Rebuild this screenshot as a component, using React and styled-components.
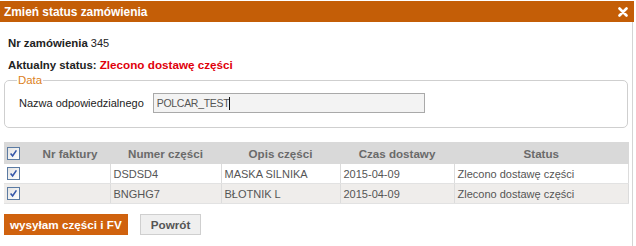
import React from "react"
import styled, { createGlobalStyle } from "styled-components"

const GlobalStyle = createGlobalStyle`
  html, body {
    margin: 0;
    padding: 0;
    background: #fff;
  }
  body {
    font-family: "Liberation Sans", Arial, sans-serif;
    font-size: 11px;
    color: #222;
  }
`

const parts = [
  { nr: "DSDSD4", opis: "MASKA SILNIKA", czas: "2015-04-09", status: "Zlecono dostawę części" },
  { nr: "BNGHG7", opis: "BŁOTNIK L", czas: "2015-04-09", status: "Zlecono dostawę części" },
]

const Check = () => (
  <CheckBox>
    <svg width="9" height="9" viewBox="0 0 9 9">
      <path d="M1.6 4.6 L3.6 7 L7.4 1.4" fill="none" stroke="#3556a8" strokeWidth="1.6" />
    </svg>
  </CheckBox>
)

const App = () => {
  return (
    <>
      <GlobalStyle />
      <Dialog>
        <TitleBar>
          <Title>Zmień status zamówienia</Title>
          <Close>
            <svg width="10" height="10" viewBox="0 0 10 10">
              <path d="M1.5 1.5 L8.5 8.5 M8.5 1.5 L1.5 8.5" stroke="#fff" strokeWidth="2.6" strokeLinecap="round" />
            </svg>
          </Close>
        </TitleBar>
        <Body>
          <InfoRow>
            <b>Nr zamówienia</b> <span>345</span>
          </InfoRow>
          <InfoRow $gap>
            <b>Aktualny status:</b> <Red>Zlecono dostawę części</Red>
          </InfoRow>
          <Fieldset>
            <Legend>Data</Legend>
            <FieldRow>
              <label>Nazwa odpowiedzialnego</label>
              <InputWrap>
                <Input type="text" defaultValue="POLCAR_TEST" readOnly />
                <Caret />
              </InputWrap>
            </FieldRow>
          </Fieldset>
          <Table>
            <colgroup>
              <col style={{ width: 26 }} />
              <col style={{ width: 80 }} />
              <col style={{ width: 111 }} />
              <col style={{ width: 119 }} />
              <col style={{ width: 114 }} />
              <col />
            </colgroup>
            <thead>
              <tr>
                <Th><Check /></Th>
                <Th>Nr faktury</Th>
                <Th>Numer części</Th>
                <Th>Opis części</Th>
                <Th>Czas dostawy</Th>
                <Th>Status</Th>
              </tr>
            </thead>
            <tbody>
              {parts.map((p, i) => (
                <Row key={p.nr} $alt={i % 2 === 1}>
                  <CheckCell><Check /></CheckCell>
                  <Td $plain></Td>
                  <Td>{p.nr}</Td>
                  <Td>{p.opis}</Td>
                  <Td>{p.czas}</Td>
                  <Td>{p.status}</Td>
                </Row>
              ))}
            </tbody>
          </Table>
          <Buttons>
            <Button $primary>wysyłam części i FV</Button>
            <Button>Powrót</Button>
          </Buttons>
        </Body>
      </Dialog>
    </>
  )
}

const Dialog = styled.div`
  width: 634px;
  height: 246px;
  padding-top: 1px;
  box-sizing: border-box;
  display: flex;
  flex-direction: column;
`

const TitleBar = styled.div`
  height: 21px;
  background: #c45e07;
  display: flex;
  align-items: center;
  justify-content: space-between;
  padding: 0 6px 0 4px;
`

const Title = styled.span`
  color: #fff;
  font-weight: bold;
  font-size: 11.9px;
`

const Close = styled.span`
  display: flex;
  margin-top: 1px;
`

const Body = styled.div`
  flex: 1;
  width: 633px;
  box-sizing: border-box;
  border-right: 1px solid #d4d4d4;
  padding: 12px 4px 0 4px;
`

const InfoRow = styled.div`
  height: 18px;
  line-height: 18px;
  padding-left: 4px;
  margin-top: ${(p) => (p.$gap ? "4px" : "0")};
  b {
    font-weight: bold;
    font-size: 11.4px;
    color: #222;
  }
`

const Red = styled.b`
  && {
    color: #e0000b;
    font-size: 11.7px;
  }
`

const Fieldset = styled.fieldset`
  margin: 0;
  padding: 7px 12px 14px;
  border: 1px solid #cfcfcf;
  border-radius: 5px;
`

const Legend = styled.legend`
  color: #dc7f22;
  font-size: 11.4px;
  line-height: 12px;
  padding: 0 1px;
`

const FieldRow = styled.div`
  display: flex;
  align-items: center;
  padding-left: 2px;
  gap: 9px;
  label {
    color: #222;
  }
`

const InputWrap = styled.span`
  position: relative;
  display: flex;
`

const Input = styled.input`
  width: 272px;
  height: 20px;
  box-sizing: border-box;
  margin: 0;
  padding: 0 3px;
  border: 1px solid #a9a9a9;
  background: #f3f3f3;
  color: #555;
  font-family: "Liberation Sans", Arial, sans-serif;
  font-size: 10.5px;
  letter-spacing: -0.3px;
  outline: none;
`

const Caret = styled.span`
  position: absolute;
  left: 76px;
  top: 4px;
  width: 1px;
  height: 13px;
  background: #111;
`

const Table = styled.table`
  margin-top: 14px;
  width: 625px;
  border-collapse: collapse;
  table-layout: fixed;
`

const Th = styled.th`
  height: 22px;
  padding: 0;
  background: #d9d9d9;
  color: #6a6a6a;
  font-weight: bold;
  font-size: 11.6px;
  text-align: center;
  vertical-align: middle;
  &:first-child {
    text-align: left;
    padding-left: 3px;
  }
`

const Row = styled.tr`
  background: ${(p) => (p.$alt ? "#efedeb" : "#fff")};
`

const Td = styled.td`
  height: 19px;
  padding: 0 3px;
  color: #555;
  font-size: 11px;
  border-left: ${(p) => (p.$plain ? "none" : "1px solid #dcdcdc")};
  border-right: 1px solid #dcdcdc;
  border-bottom: 1px solid #e2e2e2;
  white-space: nowrap;
  overflow: hidden;
`

const CheckCell = styled.td`
  padding: 0 0 0 3px;
  height: 19px;
  border-bottom: 1px solid #e2e2e2;
`

const CheckBox = styled.span`
  display: flex;
  align-items: center;
  justify-content: center;
  width: 13px;
  height: 13px;
  box-sizing: border-box;
  border: 1px solid #5b7ba3;
  background: linear-gradient(135deg, #e4e4e4, #ffffff);
`

const Buttons = styled.div`
  display: flex;
  gap: 12px;
  margin-top: 10px;
`

const Button = styled.button`
  height: 21px;
  box-sizing: border-box;
  margin: 0;
  padding: 0 ${(p) => (p.$primary ? "5px" : "10px")};
  border: 1px solid ${(p) => (p.$primary ? "#cf610d" : "#cfcfcf")};
  background: ${(p) => (p.$primary ? "#d0620e" : "#efefef")};
  color: ${(p) => (p.$primary ? "#fff" : "#555")};
  font-family: "Liberation Sans", Arial, sans-serif;
  font-weight: bold;
  font-size: 11.7px;
  cursor: pointer;
`

export default App
